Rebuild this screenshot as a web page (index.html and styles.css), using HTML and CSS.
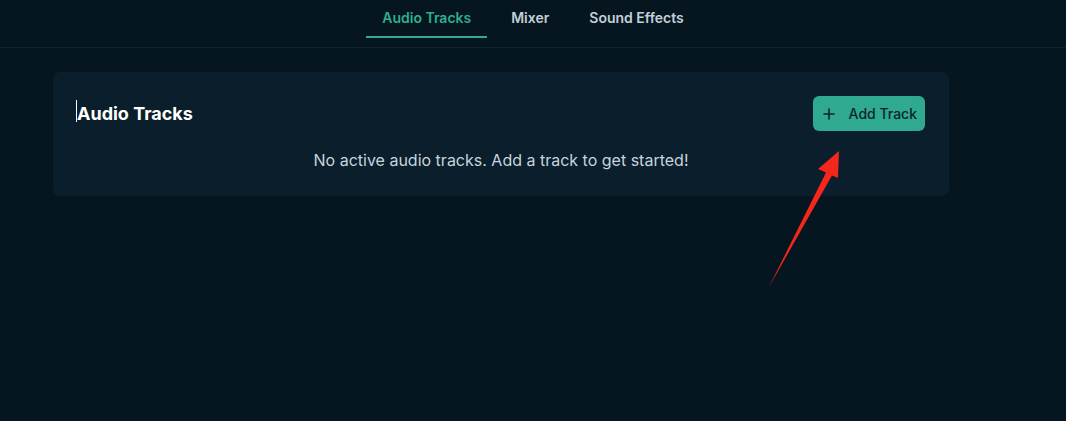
FILE: index.html
```html
<!DOCTYPE html>
<html lang="en">
<head>
    <meta charset="UTF-8">
    <meta name="viewport" content="width=device-width, initial-scale=1.0">
    <title>Audio Tracks</title>
    <link rel="stylesheet" href="styles.css">
</head>
<body>

<nav class="tabs">
    <a class="tab active" href="#">Audio Tracks</a>
    <a class="tab" href="#">Mixer</a>
    <a class="tab" href="#">Sound Effects</a>
</nav>

<main class="content">
    <section class="card">
        <div class="card-header">
            <h2 class="card-title"><span class="caret"></span>Audio Tracks</h2>
            <button class="add-btn" type="button">
                <svg class="plus" width="16" height="16" viewBox="0 0 16 16" fill="none" stroke="currentColor" stroke-width="1.6" stroke-linecap="round">
                    <path d="M8 3v10M3 8h10"/>
                </svg>
                Add Track
            </button>
        </div>
        <p class="empty">No active audio tracks. Add a track to get started!</p>
    </section>
</main>

<!-- annotation arrow -->
<svg class="arrow" width="1066" height="421" viewBox="0 0 1066 421">
    <polygon points="839,151 818,169 826,172.5 769,287 832,175.5 838,178" fill="#f5261b"/>
</svg>

</body>
</html>
```

FILE: styles.css
```css
* {
    box-sizing: border-box;
    font-family: Inter, "Noto Sans", sans-serif;
}

body {
    margin: 0;
    height: 421px;
    background-color: #061620;
    overflow: hidden;
}

.tabs {
    display: flex;
    justify-content: center;
    gap: 8px;
    padding: 8px 0 9px 0;
    border-bottom: 1px solid #0f2430;
}

.tab {
    padding: 0 16px 8px 16px;
    font-size: 14px;
    line-height: 20px;
    font-weight: 600;
    color: #c3d0d8;
    text-decoration: none;
    border-bottom: 2px solid transparent;
}

.tab.active {
    color: #2fae8f;
    border-bottom-color: #2fae8f;
}

.content {
    padding: 24px 0 0 53px;
}

.card {
    width: 896px;
    padding: 24px;
    background-color: #0a1e2b;
    border-radius: 7px;
}

.card-header {
    display: flex;
    align-items: center;
    justify-content: space-between;
    margin-bottom: 17px;
}

.card-title {
    margin: 0;
    font-size: 18px;
    font-weight: 700;
    color: #ffffff;
    position: relative;
}

.caret {
    position: absolute;
    left: -1px;
    top: -3px;
    width: 1px;
    height: 22px;
    background-color: #ffffff;
}

.add-btn {
    display: flex;
    align-items: center;
    gap: 12px;
    height: 35px;
    padding: 0 8px;
    border: none;
    border-radius: 6px;
    background-color: #2fa98f;
    color: #0b2530;
    font-size: 14px;
    font-weight: 500;
}

.empty {
    margin: 0;
    text-align: center;
    font-size: 16px;
    line-height: 24px;
    color: #c6d4de;
}

.arrow {
    position: absolute;
    left: 0;
    top: 0;
    pointer-events: none;
}
```
